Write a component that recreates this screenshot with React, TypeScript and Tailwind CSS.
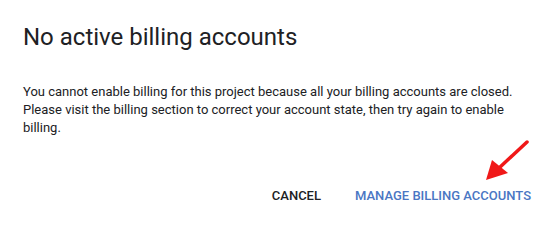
export default function App() {
  return (
    <div className="w-[559px] h-[230px] bg-white font-['Roboto',sans-serif] text-[#212121] relative overflow-hidden">
      <div className="pl-[23px] pr-6 pt-[22px]">
        <h1 className="text-[24px] leading-[30px] font-normal text-[#202124]">No active billing accounts</h1>
        <p className="mt-[31px] text-[13px] leading-[18px] text-[#202124]">
          You cannot enable billing for this project because all your billing accounts are closed. Please visit the
          billing section to correct your account state, then try again to enable billing.
        </p>
      </div>
      <div className="flex justify-end items-center gap-[18px] pr-[20px] mt-[41px]">
        <button className="px-2 h-9 text-[13px] font-medium text-[#202124]">CANCEL</button>
        <button className="px-2 h-9 text-[13px] font-medium text-[#4a76c3]">MANAGE BILLING ACCOUNTS</button>
      </div>
      <svg className="absolute left-[480px] top-[136px]" width="56" height="50" viewBox="0 0 56 50">
        <line x1="47" y1="6" x2="18" y2="33" stroke="#f01818" strokeWidth="3.5" strokeLinecap="round" />
        <polygon points="6,44 12,24 28,37" fill="#f01818" />
      </svg>
    </div>
  );
}
